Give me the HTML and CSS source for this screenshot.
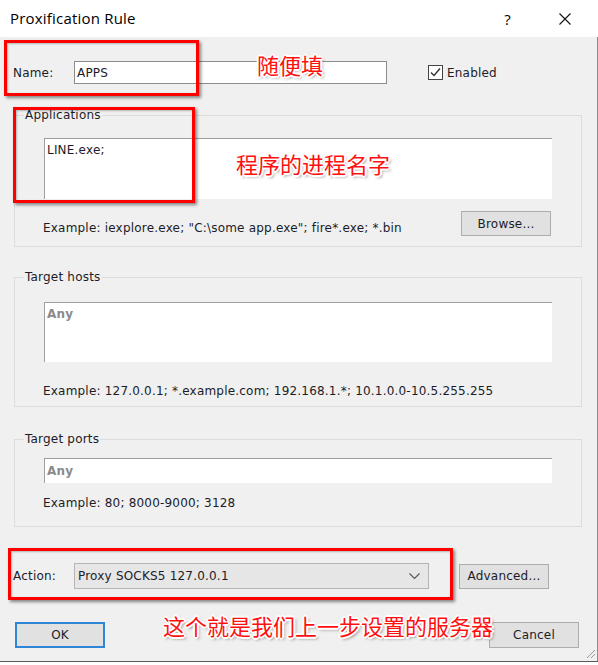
FILE: index.html
```html
<!DOCTYPE html>
<html lang="zh">
<head>
    <meta charset="UTF-8">
    <title>Proxification Rule</title>
    <link rel="stylesheet" href="styles.css">
</head>
<body>
    <div class="window">
        <div class="titlebar">
            <span class="title">Proxification Rule</span>
            <span class="help">?</span>
            <svg class="close" width="12" height="12" viewBox="0 0 12 12">
                <path d="M0.5 0.5 L11.5 11.5 M11.5 0.5 L0.5 11.5" stroke="#111" stroke-width="1.1" fill="none"/>
            </svg>
        </div>

        <div class="content">
            <div class="name-row">
                <span class="label">Name:</span>
                <div class="textbox name-box">APPS</div>
                <div class="check">
                    <span class="check-box">
                        <svg width="11" height="11" viewBox="0 0 11 11">
                            <path d="M1 5.5 L4 8.5 L10 1.5" stroke="#333" stroke-width="1.4" fill="none"/>
                        </svg>
                    </span>
                    Enabled
                </div>
            </div>

            <fieldset class="group group-apps">
                <legend>Applications</legend>
                <div class="textbox sunken apps-box">LINE.exe;</div>
                <div class="example-row">
                    <span class="example">Example: iexplore.exe; "C:\some app.exe"; fire*.exe; *.bin</span>
                    <button class="btn">Browse...</button>
                </div>
            </fieldset>

            <fieldset class="group group-hosts">
                <legend>Target hosts</legend>
                <div class="textbox sunken hosts-box"><span class="any">Any</span></div>
                <div class="example hosts-example">Example: 127.0.0.1; *.example.com; 192.168.1.*; 10.1.0.0-10.5.255.255</div>
            </fieldset>

            <fieldset class="group group-ports">
                <legend>Target ports</legend>
                <div class="textbox sunken ports-box"><span class="any">Any</span></div>
                <div class="example ports-example">Example: 80; 8000-9000; 3128</div>
            </fieldset>

            <div class="action-row">
                <span class="label">Action:</span>
                <div class="select">
                    <span>Proxy SOCKS5 127.0.0.1</span>
                    <svg width="11" height="7" viewBox="0 0 11 7">
                        <path d="M0.5 0.5 L5.5 5.5 L10.5 0.5" stroke="#555" stroke-width="1.1" fill="none"/>
                    </svg>
                </div>
                <button class="btn">Advanced...</button>
            </div>

            <div class="button-row">
                <button class="btn btn-default">OK</button>
                <button class="btn">Cancel</button>
            </div>
        </div>

        <svg class="grip" width="12" height="12" viewBox="0 0 12 12">
            <path d="M11 3 L3 11 M11 7 L7 11" stroke="#999" stroke-width="1" fill="none"/>
        </svg>

        <!-- annotations -->
        <div class="mark mark-name"></div>
        <div class="mark mark-apps"></div>
        <div class="mark mark-action"></div>
        <div class="note note-name">随便填</div>
        <div class="note note-apps">程序的进程名字</div>
        <div class="note note-action">这个就是我们上一步设置的服务器</div>
    </div>
</body>
</html>
```

FILE: styles.css
```css
body {
    margin: 0;
    padding: 0;
    background-color: #fff;
    font-family: "DejaVu Sans", sans-serif;
    font-size: 12px;
    letter-spacing: 0.2px;
    color: #1c1c28;
}

.window {
    width: 598px;
    height: 662px;
    position: relative;
    overflow: hidden;
    border-bottom: 1px solid #5a5a5a;
    box-sizing: border-box;
}

.titlebar {
    height: 37px;
    background-color: #fff;
    display: flex;
    align-items: center;
    padding-left: 10px;
}

.title {
    font-family: "Open Sans", sans-serif;
    font-size: 15px;
    letter-spacing: 0.2px;
    color: #000;
    flex: 1;
    padding-bottom: 1px;
}

.help {
    font-family: "Open Sans", sans-serif;
    font-size: 15px;
    color: #000;
    margin-right: 48px;
}

.close {
    margin-right: 27px;
}

.content {
    background-color: #f0f0f0;
    height: 624px;
    padding-top: 24px;
    box-sizing: border-box;
    border-right: 1px solid #8a8a8a;
}

.label {
    width: 61px;
    padding-left: 13px;
}

.name-row {
    display: flex;
    align-items: center;
    height: 23px;
}

.textbox {
    background-color: #fff;
    box-sizing: border-box;
    line-height: 16px;
    padding: 3px 2px;
}

.name-box {
    width: 313px;
    height: 23px;
    border: 1px solid #8c8c8c;
}

.check {
    display: flex;
    align-items: center;
    margin-left: 41px;
    gap: 4px;
}

.check-box {
    width: 15px;
    height: 15px;
    box-sizing: border-box;
    border: 1px solid #444;
    background-color: #fff;
    display: flex;
    align-items: center;
    justify-content: center;
}

.group {
    margin: 0 0 0 14px;
    width: 568px;
    box-sizing: border-box;
    border: 1px solid #dcdcdc;
    padding: 0 29px;
}

.group legend {
    line-height: 14px;
    padding: 0 1px;
    margin-left: -20px;
}

.sunken {
    border-top: 1px solid #a0a0a0;
    border-left: 1px solid #a0a0a0;
    padding: 3px 2px;
}

.group-apps {
    margin-top: 24px;
    padding-top: 16px;
    padding-bottom: 10px;
}

.apps-box {
    height: 61px;
}

.example-row {
    display: flex;
    justify-content: space-between;
    align-items: flex-end;
    margin-top: 12px;
    margin-left: -1px;
    margin-right: 1px;
}

.example {
    line-height: 16px;
}

.group-hosts {
    margin-top: 23px;
    padding-top: 18px;
    padding-bottom: 7px;
}

.hosts-box {
    height: 60px;
}

.hosts-example {
    margin-top: 21px;
    margin-left: -1px;
}

.group-ports {
    margin-top: 25px;
    padding-top: 12px;
    padding-bottom: 15px;
}

.ports-box {
    height: 25px;
    padding-top: 4px;
}

.ports-example {
    margin-top: 12px;
    margin-left: -1px;
}

.any {
    color: #8a8a8a;
    font-weight: bold;
}

.btn {
    font-family: "DejaVu Sans", sans-serif;
    font-size: 12px;
    letter-spacing: 0.2px;
    color: #1c1c28;
    width: 90px;
    height: 25px;
    background-color: #e1e1e1;
    border: 1px solid #adadad;
    padding: 0;
    margin: 0;
}

.action-row {
    display: flex;
    align-items: center;
    margin-top: 36px;
    height: 26px;
}

.select {
    width: 355px;
    height: 26px;
    box-sizing: border-box;
    border: 1px solid #b4b4b4;
    background-color: #e6e6e6;
    display: flex;
    align-items: center;
    justify-content: space-between;
    padding: 0 8px 0 3px;
    margin-right: 30px;
}

.button-row {
    display: flex;
    justify-content: space-between;
    margin-top: 33px;
    padding: 0 18px 0 15px;
}

.button-row .btn {
    height: 26px;
}

.btn-default {
    border: 2px solid #2f86d6;
}

.grip {
    position: absolute;
    right: 2px;
    bottom: 2px;
}

.mark {
    position: absolute;
    border: 3px solid #ff0000;
    box-shadow: 2px 2px 3px rgba(0, 0, 0, 0.45), inset 1px 1px 2px rgba(0, 0, 0, 0.25);
    box-sizing: border-box;
}

.mark-name {
    left: 4px;
    top: 40px;
    width: 195px;
    height: 56px;
}

.mark-apps {
    left: 13px;
    top: 107px;
    width: 182px;
    height: 96px;
}

.mark-action {
    left: 8px;
    top: 548px;
    width: 445px;
    height: 52px;
}

.note {
    position: absolute;
    font-family: "Noto Sans CJK SC", sans-serif;
    font-size: 22px;
    letter-spacing: 0;
    line-height: 24px;
    color: #ff1010;
    text-shadow:
        -1px -1px 0 #fff, 1px -1px 0 #fff, -1px 1px 0 #fff, 1px 1px 0 #fff,
        -2px 0 0 #fff, 2px 0 0 #fff, 0 -2px 0 #fff, 0 2px 0 #fff,
        2px 2px 3px rgba(0, 0, 0, 0.5);
    white-space: nowrap;
}

.note-name {
    left: 257px;
    top: 52px;
}

.note-apps {
    left: 236px;
    top: 151px;
}

.note-action {
    left: 163px;
    top: 613px;
}
```
